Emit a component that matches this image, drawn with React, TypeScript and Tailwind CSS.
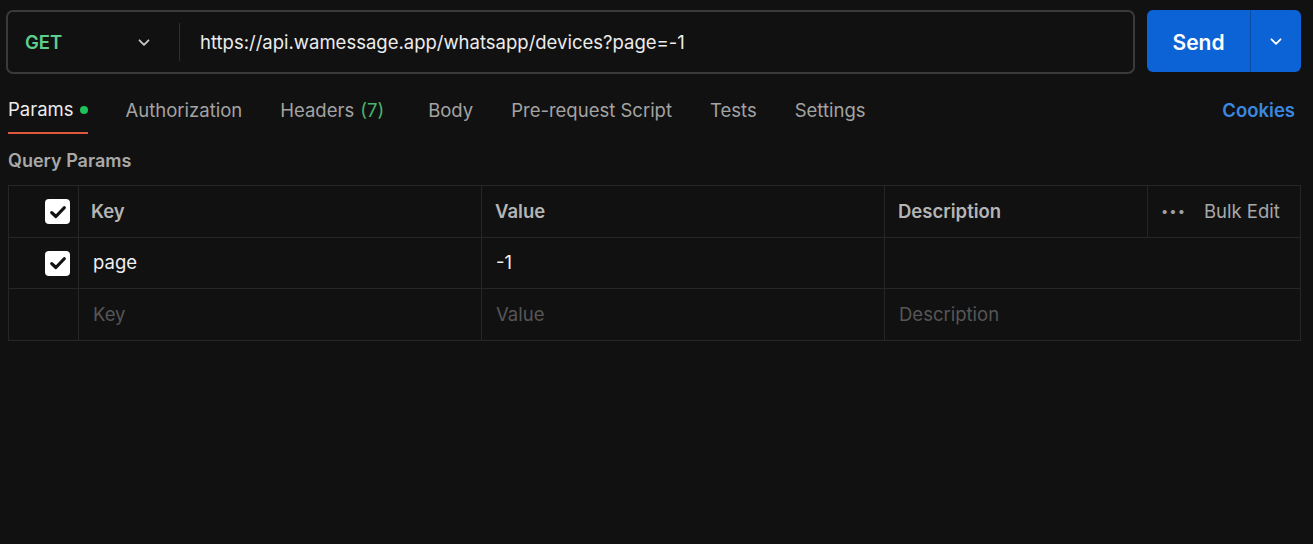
import React from 'react';

const Chevron = ({ className = '' }: { className?: string }) => (
    <svg viewBox="0 0 16 16" className={className} fill="none" stroke="currentColor" strokeWidth={1.6} strokeLinecap="round" strokeLinejoin="round">
        <path d="M4 6.5 8 10.5 12 6.5" />
    </svg>
);

const Checkbox = () => (
    <div className="w-[25px] h-[25px] rounded-[4px] bg-white flex items-center justify-center">
        <svg viewBox="0 0 16 16" className="w-[20px] h-[20px]" fill="none" stroke="#111" strokeWidth={2.6} strokeLinecap="round" strokeLinejoin="round">
            <path d="M3 8.5 6.3 11.6 13 4.6" />
        </svg>
    </div>
);

const tabs = ['Authorization', 'Headers', 'Body', 'Pre-request Script', 'Tests', 'Settings'];

export default function App() {
    return (
        <div className="w-full h-[544px] bg-[#111111] text-[#e6e6e6] font-['Inter','Noto_Sans',sans-serif] overflow-hidden">
            {/* request bar */}
            <div className="flex gap-[12px] pl-[6px] pr-[12px] pt-[10px]">
                <div className="flex-1 h-[64px] border-2 border-[#3a3a3a] rounded-[7px] flex items-center">
                    <div className="w-[171px] h-full flex items-center justify-between pl-[17px] pr-[26px]">
                        <span className="pt-[2px] text-[18.5px] font-semibold text-[#5fce8c]">GET</span>
                        <Chevron className="w-[18px] h-[18px] text-[#c8c8c8]" />
                    </div>
                    <div className="w-px h-[38px] bg-[#2e2e2e]" />
                    <div className="pl-[20px] pt-[2px] text-[18.5px] text-[#ececec]">https://api.wamessage.app/whatsapp/devices?page=-1</div>
                </div>
                <div className="h-[62px] flex rounded-[6px] overflow-hidden bg-[#0b63d6]">
                    <button className="w-[104px] h-full pt-[3px] text-white text-[21px] font-semibold border-r border-[#0a4ea8]">Send</button>
                    <button className="w-[50px] h-full flex items-center justify-center text-white">
                        <Chevron className="w-[18px] h-[18px]" />
                    </button>
                </div>
            </div>

            {/* tabs */}
            <div className="flex items-center justify-between pl-[8px] pr-[18px] mt-[14px]">
                <div className="flex gap-[38px] text-[18.5px] text-[#a3a3a3]">
                    <div className="h-[46px] flex items-center gap-[6px] border-b-2 border-[#e0583c] text-[#ececec]">
                        Params
                        <span className="w-[8px] h-[8px] rounded-full bg-[#1fc15a]" />
                    </div>
                    {tabs.map((t) => (
                        <div key={t} className={`h-[46px] flex items-center ${t === 'Headers' ? 'mr-[6px]' : ''}`}>
                            {t}
                            {t === 'Headers' && <span className="ml-[6px] text-[#4cb56c]">(7)</span>}
                        </div>
                    ))}
                </div>
                <div className="text-[18.5px] font-semibold text-[#3b88e0]">Cookies</div>
            </div>

            <div className="pl-[8px] mt-[13px] text-[18px] font-semibold text-[#a8a8a8]">Query Params</div>

            {/* params table */}
            <div className="mx-[8px] mr-[12px] mt-[11px] border border-[#262626] text-[18.5px]">
                <div className="flex h-[52px] border-b border-[#262626]">
                    <div className="w-[70px] flex items-center justify-end pr-[8px] border-r border-[#262626]">
                        <Checkbox />
                    </div>
                    <div className="w-[403px] flex items-center pl-[12px] font-semibold text-[#b5b5b5] border-r border-[#262626]">Key</div>
                    <div className="w-[403px] flex items-center pl-[13px] font-semibold text-[#b5b5b5] border-r border-[#262626]">Value</div>
                    <div className="w-[263px] flex items-center pl-[13px] font-semibold text-[#b5b5b5] border-r border-[#262626]">Description</div>
                    <div className="flex-1 flex items-center pl-[13px] text-[#a8a8a8]">
                        <span className="text-[#a0a0a0] text-[13px] tracking-[1px] mr-[18px] leading-none">•••</span>
                        Bulk Edit
                    </div>
                </div>
                <div className="flex h-[51px] border-b border-[#262626]">
                    <div className="w-[70px] flex items-center justify-end pr-[8px] border-r border-[#262626]">
                        <Checkbox />
                    </div>
                    <div className="w-[403px] flex items-center pl-[14px] text-[#f0f0f0] border-r border-[#262626]">page</div>
                    <div className="w-[403px] flex items-center pl-[14px] text-[#f0f0f0] border-r border-[#262626]">-1</div>
                    <div className="flex-1" />
                </div>
                <div className="flex h-[51px]">
                    <div className="w-[70px] border-r border-[#262626]" />
                    <div className="w-[403px] flex items-center pl-[14px] text-[#565656] border-r border-[#262626]">Key</div>
                    <div className="w-[403px] flex items-center pl-[14px] text-[#565656] border-r border-[#262626]">Value</div>
                    <div className="flex-1 flex items-center pl-[14px] text-[#565656]">Description</div>
                </div>
            </div>
        </div>
    );
}
